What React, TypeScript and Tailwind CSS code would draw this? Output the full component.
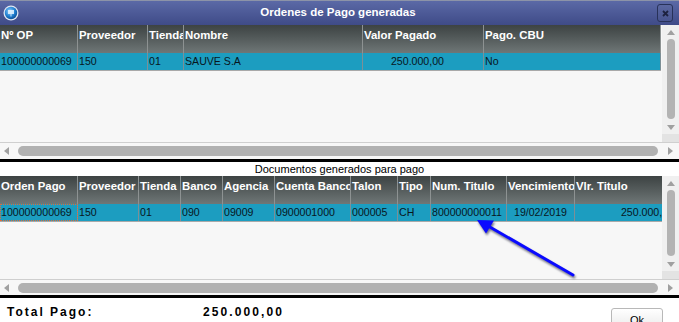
import React from 'react'

type Col = { label: string; w: string; value: string; align?: string; focus?: boolean }

const topCols: Col[] = [
  { label: 'Nº OP', w: 'w-[78px]', value: '100000000069' },
  { label: 'Proveedor', w: 'w-[70px]', value: '150' },
  { label: 'Tienda', w: 'w-[36px]', value: '01' },
  { label: 'Nombre', w: 'w-[179px]', value: 'SAUVE S.A' },
  { label: 'Valor Pagado', w: 'w-[121px]', value: '250.000,00', align: 'text-right pr-[39px]' },
  { label: 'Pago. CBU', w: 'w-[177px]', value: 'No' },
]

const bottomCols: Col[] = [
  { label: 'Orden Pago', w: 'w-[78px]', value: '100000000069', focus: true },
  { label: 'Proveedor', w: 'w-[61px]', value: '150' },
  { label: 'Tienda', w: 'w-[42px]', value: '01' },
  { label: 'Banco', w: 'w-[42px]', value: '090' },
  { label: 'Agencia', w: 'w-[52px]', value: '09009' },
  { label: 'Cuenta Banco', w: 'w-[76px]', value: '0900001000' },
  { label: 'Talon', w: 'w-[47px]', value: '000005' },
  { label: 'Tipo', w: 'w-[33px]', value: 'CH' },
  { label: 'Num. Titulo', w: 'w-[76px]', value: '800000000011' },
  { label: 'Vencimiento', w: 'w-[68px]', value: '19/02/2019', align: 'text-center' },
  { label: 'Vlr. Titulo', w: 'w-[106px]', value: '250.000,00', align: 'text-right pr-[6px]' },
]

function Grid({ cols, height }: { cols: Col[]; height: string }) {
  return (
    <div className={`flex shrink-0 ${height}`}>
      <div className="flex-1 overflow-hidden bg-[#f7f7f7]">
        <div className="flex h-[28px] w-max bg-gradient-to-b from-[#3d4343] to-[#6f7777]">
          {cols.map((c) => (
            <div
              key={c.label}
              className={`${c.w} shrink-0 overflow-hidden whitespace-nowrap border-r border-[#8d9292] pl-[1px] pt-[3px] text-[11.4px] font-bold leading-[14px] text-white`}
            >
              {c.label}
            </div>
          ))}
        </div>
        <div className="flex h-[18px] w-max border-b border-[#a9a9a9] bg-[#1c9dc0]">
          {cols.map((c) => (
            <div
              key={c.label}
              className={`${c.w} shrink-0 overflow-hidden whitespace-nowrap border-r border-[#7d8f96] text-[10.6px] leading-[17px] text-[#08161e] ${c.align ?? 'pl-[1px]'} ${c.focus ? 'outline outline-1 -outline-offset-1 outline-dotted outline-[#e06a3a]' : ''}`}
            >
              {c.value}
            </div>
          ))}
        </div>
      </div>
      <VScroll />
    </div>
  )
}

function VScroll() {
  return (
    <div className="flex w-[17px] flex-col items-center bg-[#f0f0f0]">
      <div className="mt-[5px] h-0 w-0 border-x-[4px] border-b-[5px] border-x-transparent border-b-[#a0a0a0]" />
      <div className="mt-[4px] w-[8px] flex-1 rounded-full bg-[#b3b3b3]" />
      <div className="mt-[6px] h-0 w-0 border-x-[4px] border-t-[5px] border-x-transparent border-t-[#a0a0a0]" />
      <div className="mt-[4px] h-[8px] w-full bg-[#e3e3e3]" />
    </div>
  )
}

function HScroll({ height }: { height: string }) {
  return (
    <div className={`flex shrink-0 ${height} items-center border-t border-[#cfcfcf] bg-[#f7f7f7] pl-[4px] pr-[6px]`}>
      <div className="h-0 w-0 border-y-[4px] border-r-[5px] border-y-transparent border-r-[#a0a0a0]" />
      <div className="ml-[9px] h-[10px] flex-1 rounded-full bg-[#b1b1b1]" />
      <div className="ml-[10px] h-0 w-0 border-y-[4px] border-l-[5px] border-y-transparent border-l-[#a0a0a0]" />
    </div>
  )
}

export default function App() {
  return (
    <div
      className="relative flex h-[322px] w-[679px] flex-col overflow-hidden bg-white"
      style={{ fontFamily: '"Liberation Sans", Arial, sans-serif' }}
    >
      {/* Title bar */}
      <div className="relative flex h-[25px] shrink-0 items-center border-t border-[#8c93a8] bg-gradient-to-b from-[#5b69a6] to-[#3f4b88] px-[3px]">
        <svg width="16" height="16" viewBox="0 0 16 16">
          <defs>
            <radialGradient id="ball" cx="0.4" cy="0.35" r="0.7">
              <stop offset="0" stopColor="#8fd0ff" />
              <stop offset="0.6" stopColor="#1f7fd0" />
              <stop offset="1" stopColor="#0b4a90" />
            </radialGradient>
          </defs>
          <circle cx="8" cy="8" r="7.5" fill="#dfe6f2" />
          <circle cx="8" cy="8" r="6.2" fill="url(#ball)" />
          <path d="M5 5h6v4H8.5v2.5H7.5V9H5z" fill="#e8f4ff" opacity="0.85" />
        </svg>
        <div className="flex-1 text-center text-[11.5px] font-bold leading-none text-white">
          Ordenes de Pago generadas
        </div>
        <div className="mr-[3px] flex h-[18px] w-[16px] items-center justify-center rounded-[3px] border border-[#283259] bg-gradient-to-b from-[#5a67a0] to-[#48548f]">
          <svg width="7" height="7" viewBox="0 0 7 7">
            <path d="M1 1L6 6M6 1L1 6" stroke="#1d2240" strokeWidth="1.8" />
          </svg>
        </div>
      </div>

      {/* Top grid */}
      <Grid cols={topCols} height="h-[117px]" />
      <HScroll height="h-[17px]" />
      <div className="h-[3px] shrink-0 bg-black" />

      {/* Label */}
      <div className="h-[14px] shrink-0 text-center text-[11px] leading-[14px] text-black">
        Documentos generados para pago
      </div>

      {/* Bottom grid */}
      <Grid cols={bottomCols} height="h-[103px]" />
      <HScroll height="h-[16px]" />
      <div className="h-[3px] shrink-0 bg-black" />

      {/* Footer */}
      <div className="flex min-h-0 flex-1 items-start overflow-hidden bg-white pt-[8px]">
        <div className="w-[203px] pl-[7px] text-[12px] font-bold leading-[12px] tracking-[2px] text-black">
          Total Pago:
        </div>
        <div className="text-[12px] font-bold leading-[12px] tracking-[2.1px] text-black">250.000,00</div>
        <div className="ml-auto mr-[16px] mt-[2px] flex h-[20px] w-[52px] shrink-0 items-start justify-center rounded-[3px] border border-[#b8b8b8] bg-gradient-to-b from-white to-[#ececec] pt-[5px] text-[11px] leading-[12px] text-black">
          Ok
        </div>
      </div>

      {/* Annotation arrow */}
      <svg
        className="pointer-events-none absolute left-0 top-0"
        width="679"
        height="322"
        style={{ filter: 'drop-shadow(1px 2px 1px rgba(0,0,30,0.55))' }}
      >
        <line x1="573" y1="275" x2="489" y2="226.5" stroke="#0a0aff" strokeWidth="3" strokeLinecap="round" />
        <polygon points="477,220 486,233.5 494,220.5" fill="#0a0aff" />
      </svg>
    </div>
  )
}
